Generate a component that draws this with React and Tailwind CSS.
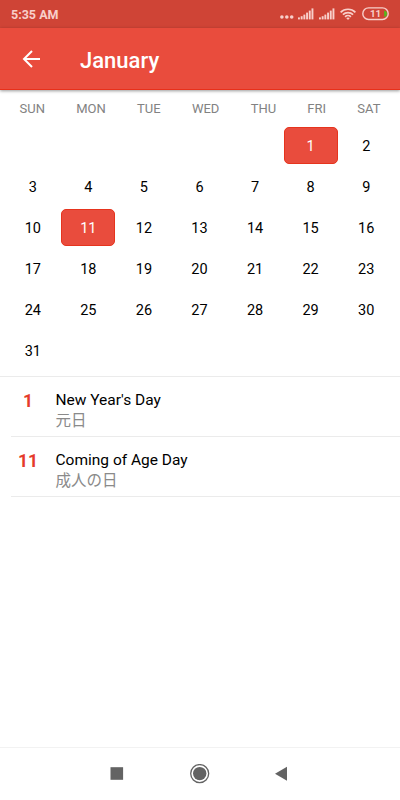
import React from 'react'

const WEEKDAYS = ['SUN', 'MON', 'TUE', 'WED', 'THU', 'FRI', 'SAT']
const FIRST_WEEKDAY = 5
const DAYS_IN_MONTH = 31

const HOLIDAYS = [
  { day: 1, name: "New Year's Day", local: '元日' },
  { day: 11, name: 'Coming of Age Day', local: '成人の日' },
]

function Signal() {
  return (
    <svg width="16" height="12" viewBox="0 0 16 12" fill="currentColor">
      <rect x="0" y="9.4" width="1.9" height="2" />
      <rect x="2.7" y="8.2" width="1.9" height="3.2" />
      <rect x="5.4" y="6.6" width="1.9" height="4.8" />
      <rect x="8.1" y="4.6" width="1.9" height="6.8" />
      <rect x="10.8" y="2.6" width="1.9" height="8.8" />
      <rect x="13.5" y="0.4" width="1.9" height="11" />
    </svg>
  )
}

function Wifi() {
  return (
    <svg width="16" height="12" viewBox="0 0 16 12" fill="none" stroke="currentColor" strokeWidth="1.7">
      <path d="M0.6 4.3C4.7 0.2 11.3 0.2 15.4 4.3" />
      <path d="M2.9 6.7C5.7 3.9 10.3 3.9 13.1 6.7" />
      <path d="M5.1 8.9C6.7 7.3 9.3 7.3 10.9 8.9" />
      <path d="M8 12L6.2 10.1C7.2 9.2 8.8 9.2 9.8 10.1Z" fill="currentColor" stroke="none" />
    </svg>
  )
}

function StatusBar() {
  return (
    <div className="h-7 shrink-0 bg-[#cf4436] text-[#f8cfca] flex items-center justify-between pl-[11px] pr-[11px]">
      <span className="text-[12.5px] leading-none font-bold pt-[2px]">5:35 AM</span>
      <div className="flex items-center">
        <svg className="mt-[6px] mr-1" width="14" height="4" viewBox="0 0 14 4" fill="currentColor">
          <circle cx="1.9" cy="2" r="1.8" />
          <circle cx="6.8" cy="2" r="1.8" />
          <circle cx="11.7" cy="2" r="1.8" />
        </svg>
        <Signal />
        <div className="w-[5px]" />
        <Signal />
        <div className="w-[5px]" />
        <Wifi />
        <svg className="ml-1.5" width="27" height="14" viewBox="0 0 27 14">
          <rect x="0.8" y="0.9" width="25.4" height="11.6" rx="5.8" fill="none" stroke="currentColor" strokeWidth="1.4" />
          <path d="M22.2 3.4Q25 4 25 6.7T22.2 10Z" fill="#56b81c" />
          <text x="13.6" y="10.2" textAnchor="middle" fontSize="9.8" fontWeight="700" fill="currentColor">11</text>
        </svg>
      </div>
    </div>
  )
}

function Header() {
  return (
    <header className="h-[62px] shrink-0 bg-[#e94c3d] border-b border-[#e8301a] shadow-[0_1px_3px_rgba(0,0,0,0.4)] flex items-center text-white">
      <svg className="ml-[22px]" width="19" height="18" viewBox="0 0 19 18" fill="none" stroke="currentColor" strokeWidth="2">
        <path d="M18 9H2M10 1L2 9L10 17" />
      </svg>
      <h1 className="ml-[39px] mt-[5px] text-[22px] leading-none font-medium">January</h1>
    </header>
  )
}

function Calendar() {
  const cells = [
    ...Array(FIRST_WEEKDAY).fill(null),
    ...Array.from({ length: DAYS_IN_MONTH }, (_, i) => i + 1),
  ]
  const marked = HOLIDAYS.map(h => h.day)

  return (
    <div className="border-b border-[#ebebeb] pb-[5px]">
      <div className="h-[35px] pt-[3px] px-[19.5px] flex items-center justify-between text-[13px] text-[#828282]">
        {WEEKDAYS.map(d => <span key={d}>{d}</span>)}
      </div>
      <div className="grid grid-cols-7 auto-rows-[41px] pl-[5px] pr-[6px]">
        {cells.map((day, i) => (
          <div key={i} className="flex items-center justify-center">
            {day && (
              <span className={`w-[54px] h-[37px] pt-0.5 rounded-[5px] flex items-center justify-center text-[14.5px] ${marked.includes(day) ? 'bg-[#e94c3d] border border-[#e6341e] text-white' : 'text-black'}`}>
                {day}
              </span>
            )}
          </div>
        ))}
      </div>
    </div>
  )
}

function HolidayList() {
  return (
    <ul>
      {HOLIDAYS.map(h => (
        <li key={h.day} className="ml-[11px] h-[60px] border-b border-[#ebebeb] flex">
          <span className="w-[34px] pt-[14px] text-center text-[17.5px] leading-5 font-bold text-[#e53a2b]">{h.day}</span>
          <div className="ml-[10.5px] pt-3">
            <div className="text-[15.5px] leading-[22px] text-black">{h.name}</div>
            <div className="text-[15.5px] leading-5 text-[#8a8a8a]">{h.local}</div>
          </div>
        </li>
      ))}
    </ul>
  )
}

function NavBar() {
  return (
    <nav className="mt-auto h-[53px] shrink-0 border-t border-[#f2f2f2] px-[107px] flex items-center justify-between text-[#636363]">
      <svg width="20" height="20" viewBox="0 0 20 20" fill="currentColor">
        <rect x="3.5" y="3.2" width="12.6" height="12.6" />
      </svg>
      <svg width="20" height="20" viewBox="0 0 20 20" fill="currentColor">
        <circle cx="9.7" cy="9.6" r="9" fill="none" stroke="currentColor" strokeWidth="1.3" />
        <circle cx="9.7" cy="9.6" r="6.7" />
      </svg>
      <svg width="20" height="20" viewBox="0 0 20 20" fill="currentColor">
        <path d="M14 2.7V16.7L2 9.7Z" />
      </svg>
    </nav>
  )
}

export default function App() {
  return (
    <div className="w-[400px] h-[800px] bg-white flex flex-col overflow-hidden font-[Roboto,'Noto_Sans_CJK_JP',sans-serif]">
      <StatusBar />
      <Header />
      <Calendar />
      <HolidayList />
      <NavBar />
    </div>
  )
}
